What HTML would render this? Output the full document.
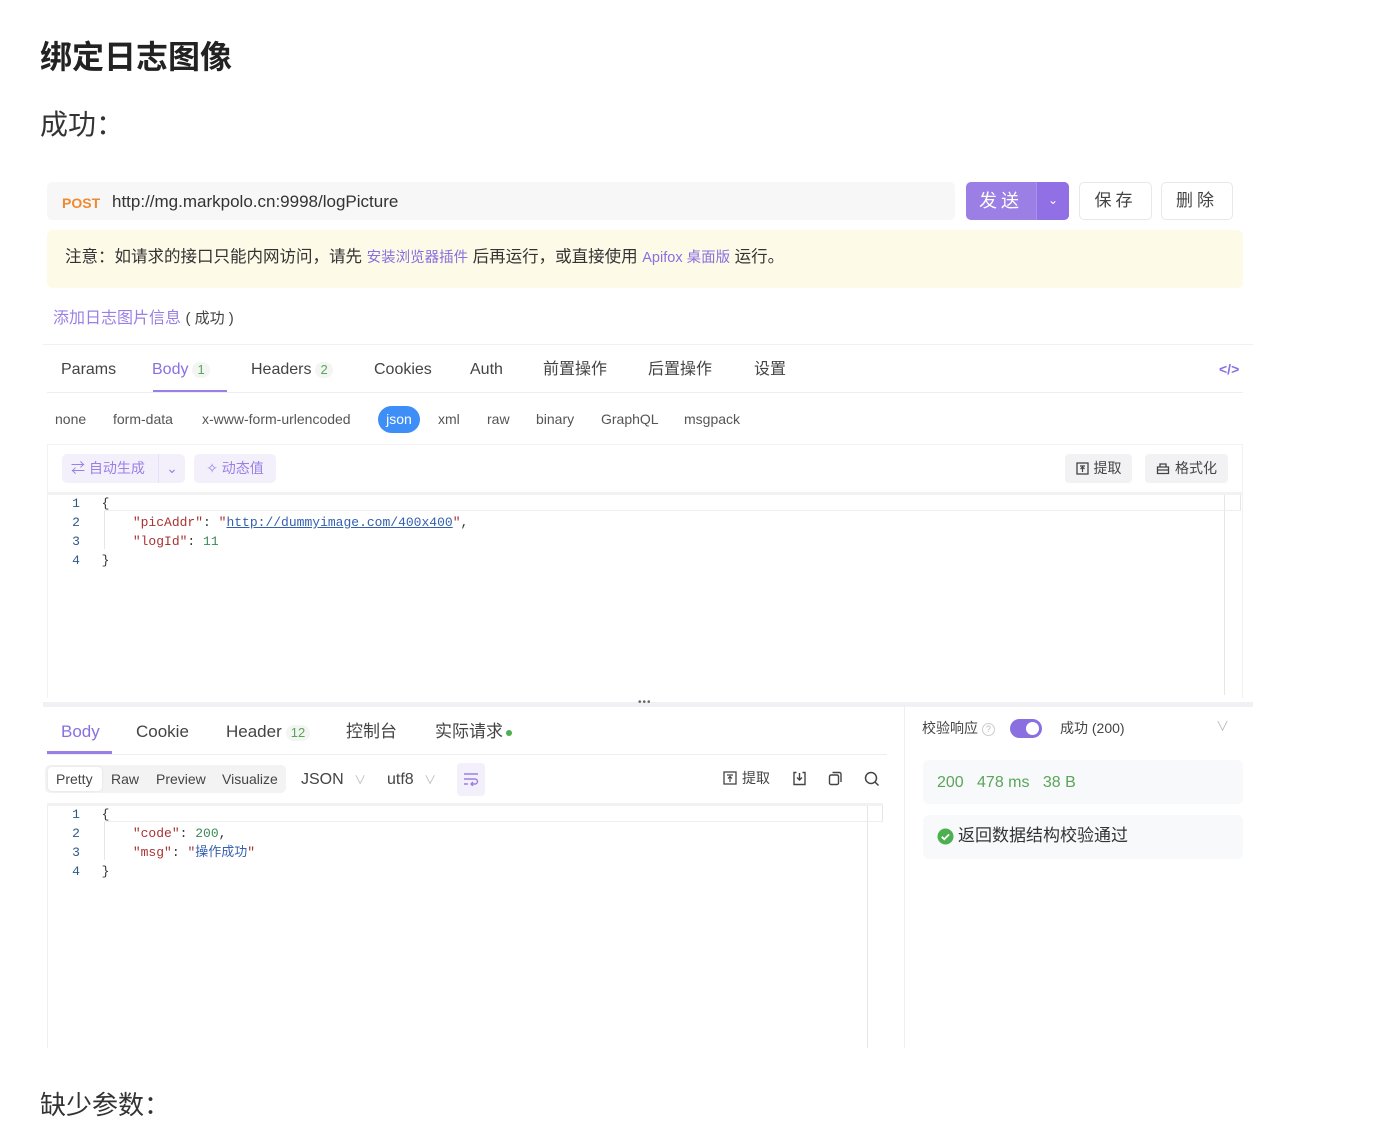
<!DOCTYPE html>
<html><head><meta charset="utf-8">
<style>
*{box-sizing:border-box;margin:0;padding:0}
body{width:1376px;height:1102px;overflow:hidden;background:#fff;font-family:"Liberation Sans","Noto Sans CJK SC",sans-serif;color:#333;position:relative}
.a{position:absolute;white-space:nowrap;line-height:1.2}
.mono{font-family:"Liberation Mono","Noto Sans CJK SC",monospace;font-size:13px}
.tab{font-size:16px;color:#444}
.badge{display:inline-block;background:#f3f5f3;color:#5aa55a;font-size:13px;padding:0 5px;border-radius:8px;margin-left:4px}
.btn{background:#f2f2f4;border-radius:4px;font-size:14px;color:#444;display:flex;align-items:center;justify-content:center;gap:5px}
.ln{color:#2d5a8a;width:20px;text-align:center}
.k{color:#a33}
.n{color:#3a8a5a}
.s{color:#3460b0}
</style></head><body>
<div class="a" style="left:40px;top:38px;font-size:32px;font-weight:bold;color:#222">绑定日志图像</div>
<div class="a" style="left:40px;top:108px;font-size:28px;color:#333">成功：</div>

<div class="a" style="left:47px;top:182px;width:908px;height:38px;background:#f7f7f7;border-radius:5px"></div>
<div class="a" style="left:62px;top:195px;font-size:14px;font-weight:bold;color:#f08a30">POST</div>
<div class="a" style="left:112px;top:192px;font-size:17px;color:#333">http://mg.markpolo.cn:9998/logPicture</div>

<div class="a" style="left:966px;top:182px;width:103px;height:38px;background:#9b7fe4;border-radius:5px;overflow:hidden">
  <div style="position:absolute;left:0;top:0;width:70px;height:38px;color:#fff;font-size:18px;text-align:center;line-height:38px;letter-spacing:4px">发送</div>
  <div style="position:absolute;left:70px;top:0;width:33px;height:38px;background:#9070e4;border-left:1px solid #a890ec;color:#fff;text-align:center;line-height:36px;font-size:12px">⌄</div>
</div>
<div class="a" style="left:1079px;top:182px;width:73px;height:38px;border:1px solid #e8e8e8;border-radius:5px;text-align:center;line-height:36px;font-size:17px;letter-spacing:4px;color:#444">保存</div>
<div class="a" style="left:1161px;top:182px;width:72px;height:38px;border:1px solid #e8e8e8;border-radius:5px;text-align:center;line-height:36px;font-size:17px;letter-spacing:4px;color:#444">删除</div>

<div class="a" style="left:47px;top:230px;width:1196px;height:58px;background:#fefae8;border-radius:6px"></div>
<div class="a" style="left:65px;top:248px;font-size:16.5px;color:#333">注意：如请求的接口只能内网访问，请先 <span style="color:#8a6fe0;font-size:14.5px">安装浏览器插件</span> 后再运行，或直接使用 <span style="color:#8a6fe0;font-size:14.5px">Apifox 桌面版</span> 运行。</div>

<div class="a" style="left:53px;top:309px;font-size:16px;color:#9a80e4">添加日志图片信息 <span style="color:#444;font-size:15px">( 成功 )</span></div>

<div class="a" style="left:43px;top:344px;width:1210px;height:1px;background:#f0f0f0"></div>
<div class="a tab" style="left:61px;top:360px">Params</div>
<div class="a tab" style="left:152px;top:360px;color:#8a6fe0">Body<span class="badge">1</span></div>
<div class="a" style="left:153px;top:390px;width:74px;height:3px;background:#9a80e4"></div>
<div class="a tab" style="left:251px;top:360px">Headers<span class="badge">2</span></div>
<div class="a tab" style="left:374px;top:360px">Cookies</div>
<div class="a tab" style="left:470px;top:360px">Auth</div>
<div class="a tab" style="left:543px;top:360px">前置操作</div>
<div class="a tab" style="left:648px;top:360px">后置操作</div>
<div class="a tab" style="left:754px;top:360px">设置</div>
<div class="a" style="left:1219px;top:361px;font-size:14px;color:#8a6fe0;font-weight:bold">&lt;/&gt;</div>
<div class="a" style="left:47px;top:392px;width:1196px;height:1px;background:#eee"></div>

<div class="a" style="left:55px;top:411px;font-size:14px;color:#555">none</div>
<div class="a" style="left:113px;top:411px;font-size:14px;color:#555">form-data</div>
<div class="a" style="left:202px;top:411px;font-size:14px;color:#555">x-www-form-urlencoded</div>
<div class="a" style="left:378px;top:406px;width:42px;height:27px;background:#3e8ef7;border-radius:14px;color:#fff;font-size:14px;text-align:center;line-height:27px">json</div>
<div class="a" style="left:438px;top:411px;font-size:14px;color:#555">xml</div>
<div class="a" style="left:487px;top:411px;font-size:14px;color:#555">raw</div>
<div class="a" style="left:536px;top:411px;font-size:14px;color:#555">binary</div>
<div class="a" style="left:601px;top:411px;font-size:14px;color:#555">GraphQL</div>
<div class="a" style="left:684px;top:411px;font-size:14px;color:#555">msgpack</div>

<div class="a" style="left:47px;top:444px;width:1196px;height:254px;border:1px solid #f2f2f2;border-bottom:none"></div>
<div class="a" style="left:62px;top:454px;width:123px;height:29px;background:#f3f0fc;border-radius:5px;color:#9a80e4;font-size:14px;line-height:29px;padding-left:9px">⇄ 自动生成<span style="position:absolute;left:96px;top:0;height:29px;border-left:1px solid #e6e0f8;width:27px;text-align:center">⌄</span></div>
<div class="a" style="left:194px;top:454px;width:82px;height:29px;background:#f3f0fc;border-radius:5px;color:#9a80e4;font-size:14px;line-height:29px;text-align:center">✧ 动态值</div>
<div class="a btn" style="left:1065px;top:454px;width:67px;height:29px">
<svg width="13" height="13" viewBox="0 0 13 13"><rect x="1" y="1" width="11" height="11" fill="none" stroke="#444" stroke-width="1.3"/><path d="M4 4h5M6.5 10V5M4.5 7l2-2 2 2" fill="none" stroke="#444" stroke-width="1.2"/></svg>提取</div>
<div class="a btn" style="left:1145px;top:454px;width:83px;height:29px">
<svg width="14" height="13" viewBox="0 0 14 13"><path d="M1.5 5h11v6.5h-11zM4 5V2h6v3M1.5 8h11" fill="none" stroke="#444" stroke-width="1.3"/></svg>格式化</div>

<div class="a" style="left:47px;top:492px;width:1196px;height:3px;background:#f2f2f2"></div>
<div class="a" style="left:1224px;top:495px;width:1px;height:200px;background:#e6e6e6"></div>
<div class="a" style="left:1240px;top:495px;width:1px;height:16px;background:#e6e6e6"></div>
<div class="a" style="left:104px;top:495px;width:1137px;height:16px;border-bottom:1px solid #eee"></div>
<div class="a" style="left:104px;top:511px;width:1px;height:38px;background:#e6e6e6"></div>
<div class="a mono" style="left:66px;top:494px;line-height:19px">
<div><span class="ln" style="display:inline-block">1</span>&nbsp;&nbsp;{</div>
<div><span class="ln" style="display:inline-block">2</span>&nbsp;&nbsp;&nbsp;&nbsp;&nbsp;&nbsp;<span class="k">"picAddr"</span>: <span class="k">"</span><span class="s" style="text-decoration:underline">http://dummyimage.com/400x400</span><span class="k">"</span>,</div>
<div><span class="ln" style="display:inline-block">3</span>&nbsp;&nbsp;&nbsp;&nbsp;&nbsp;&nbsp;<span class="k">"logId"</span>: <span class="n">11</span></div>
<div><span class="ln" style="display:inline-block">4</span>&nbsp;&nbsp;}</div>
</div>

<div class="a" style="left:43px;top:702px;width:1210px;height:5px;background:#f0f0f5"></div>
<div class="a" style="left:638px;top:697px;font-size:10px;color:#666;letter-spacing:1px">•••</div>

<div class="a tab" style="left:61px;top:722px;font-size:17px;color:#8a6fe0">Body</div>
<div class="a" style="left:47px;top:751px;width:65px;height:3px;background:#9a80e4"></div>
<div class="a tab" style="left:136px;top:722px;font-size:17px">Cookie</div>
<div class="a tab" style="left:226px;top:722px;font-size:17px">Header<span class="badge">12</span></div>
<div class="a tab" style="left:346px;top:722px;font-size:17px">控制台</div>
<div class="a tab" style="left:435px;top:722px;font-size:17px">实际请求<span style="display:inline-block;width:6px;height:6px;background:#4caf50;border-radius:50%;margin-left:3px;vertical-align:middle"></span></div>
<div class="a" style="left:47px;top:754px;width:840px;height:1px;background:#eee"></div>

<div class="a" style="left:45px;top:765px;width:241px;height:28px;background:#f3f3f3;border-radius:5px"></div>
<div class="a" style="left:48px;top:767px;width:54px;height:24px;background:#fff;border-radius:4px;box-shadow:0 0 2px #ddd"></div>
<div class="a" style="left:56px;top:771px;font-size:14px;color:#444">Pretty</div>
<div class="a" style="left:111px;top:771px;font-size:14px;color:#444">Raw</div>
<div class="a" style="left:156px;top:771px;font-size:14px;color:#444">Preview</div>
<div class="a" style="left:222px;top:771px;font-size:14px;color:#444">Visualize</div>
<div class="a" style="left:301px;top:770px;font-size:16px;color:#444">JSON <span style="color:#bbb;margin-left:6px;font-size:12px">∨</span></div>
<div class="a" style="left:387px;top:770px;font-size:16px;color:#444">utf8 <span style="color:#bbb;margin-left:6px;font-size:12px">∨</span></div>
<div class="a" style="left:457px;top:763px;width:28px;height:33px;background:#f3f0fc;border-radius:4px"></div>
<svg class="a" style="left:463px;top:772px" width="16" height="14" viewBox="0 0 16 14"><path d="M1 2h14M1 7h11a2.5 2.5 0 0 1 0 5H8M10 10l-2 2 2 2M1 12h4" fill="none" stroke="#9a80e4" stroke-width="1.4"/></svg>
<div class="a" style="left:723px;top:770px;font-size:14px;color:#444;display:flex;align-items:center;gap:5px"><svg width="14" height="14" viewBox="0 0 14 14"><rect x="1" y="1" width="12" height="12" fill="none" stroke="#444" stroke-width="1.3"/><path d="M4 4h6M7 11V5.5M5 7.5l2-2 2 2" fill="none" stroke="#444" stroke-width="1.2"/></svg>提取</div>
<svg class="a" style="left:792px;top:771px" width="15" height="15" viewBox="0 0 15 15"><path d="M4.5 1.5H2v12h11v-12h-2.5M7.5 2v7M5 6.5l2.5 2.5 2.5-2.5" fill="none" stroke="#444" stroke-width="1.4"/></svg>
<svg class="a" style="left:828px;top:771px" width="15" height="15" viewBox="0 0 15 15"><rect x="1.5" y="4" width="9" height="9.5" rx="1.5" fill="none" stroke="#444" stroke-width="1.4"/><path d="M4.5 1.5h7a1.5 1.5 0 0 1 1.5 1.5v8" fill="none" stroke="#444" stroke-width="1.4"/></svg>
<svg class="a" style="left:864px;top:771px" width="16" height="16" viewBox="0 0 16 16"><circle cx="7" cy="7" r="5.5" fill="none" stroke="#444" stroke-width="1.5"/><path d="M11 11l3.5 3.5" stroke="#444" stroke-width="1.5"/></svg>

<div class="a" style="left:47px;top:803px;width:836px;height:3px;background:#f2f2f2"></div>
<div class="a" style="left:47px;top:806px;width:1px;height:242px;background:#f0f0f0"></div>
<div class="a" style="left:867px;top:806px;width:1px;height:242px;background:#e6e6e6"></div>
<div class="a" style="left:882px;top:806px;width:1px;height:16px;background:#e6e6e6"></div>
<div class="a" style="left:104px;top:806px;width:779px;height:16px;border-bottom:1px solid #eee"></div>
<div class="a" style="left:104px;top:822px;width:1px;height:38px;background:#e6e6e6"></div>
<div class="a mono" style="left:66px;top:805px;line-height:19px">
<div><span class="ln" style="display:inline-block">1</span>&nbsp;&nbsp;{</div>
<div><span class="ln" style="display:inline-block">2</span>&nbsp;&nbsp;&nbsp;&nbsp;&nbsp;&nbsp;<span class="k">"code"</span>: <span class="n">200</span>,</div>
<div><span class="ln" style="display:inline-block">3</span>&nbsp;&nbsp;&nbsp;&nbsp;&nbsp;&nbsp;<span class="k">"msg"</span>: <span class="k">"</span><span class="s">操作成功</span><span class="k">"</span></div>
<div><span class="ln" style="display:inline-block">4</span>&nbsp;&nbsp;}</div>
</div>

<div class="a" style="left:904px;top:707px;width:1px;height:341px;background:#eee"></div>
<div class="a" style="left:922px;top:720px;font-size:14px;color:#444">校验响应 <span style="display:inline-block;width:13px;height:13px;border:1px solid #ccc;border-radius:50%;font-size:9px;color:#bbb;text-align:center;line-height:11px;vertical-align:middle">?</span></div>
<div class="a" style="left:1010px;top:719px;width:32px;height:19px;background:#8a6fe0;border-radius:10px"><div style="position:absolute;right:3px;top:3px;width:13px;height:13px;background:#fff;border-radius:50%"></div></div>
<div class="a" style="left:1060px;top:720px;font-size:14px;color:#444">成功 (200)</div>
<div class="a" style="left:1216px;top:719px;font-size:13px;color:#bbb">∨</div>
<div class="a" style="left:923px;top:760px;width:320px;height:44px;background:#f8f9fa;border-radius:6px"></div>
<div class="a" style="left:937px;top:773px;font-size:16px;color:#5aa55a">200 &nbsp; 478 ms &nbsp; 38 B</div>
<div class="a" style="left:923px;top:815px;width:320px;height:44px;background:#f8f9fa;border-radius:6px"></div>
<div class="a" style="left:937px;top:826px;font-size:17px;color:#333;display:flex;align-items:center;gap:4px"><svg width="17" height="17" viewBox="0 0 17 17"><circle cx="8.5" cy="8.5" r="8" fill="#4caf50"/><path d="M4.8 8.8l2.5 2.4 4.8-4.8" fill="none" stroke="#fff" stroke-width="1.8"/></svg>返回数据结构校验通过</div>

<div class="a" style="left:40px;top:1090px;font-size:26px;color:#333">缺少参数：</div>
</body></html>
